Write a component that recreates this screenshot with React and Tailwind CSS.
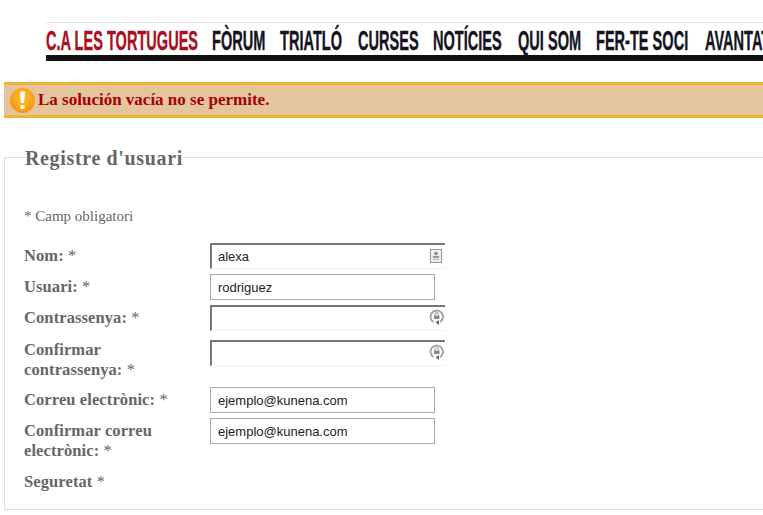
const navItems = [
  { text: 'FÒRUM', width: 'w-[53px]' },
  { text: 'TRIATLÓ', width: 'w-[63px]' },
  { text: 'CURSES', width: 'w-[60px]' },
  { text: 'NOTÍCIES', width: 'w-[70px]' },
  { text: 'QUI SOM', width: 'w-[63px]' },
  { text: 'FER-TE SOCI', width: 'w-[94px]' },
  { text: 'AVANTATGES', width: 'w-[110px]' },
];

function NavLabel({ children }) {
  return <span className="inline-block origin-left scale-x-[0.52] [-webkit-text-stroke:0.4px_currentColor]">{children}</span>;
}

function CardIcon() {
  return (
    <svg width="12" height="14" viewBox="0 0 12 14" className="absolute right-[3px] top-[4px]">
      <rect x="0.5" y="0.5" width="11" height="13" fill="#eee" stroke="#999" />
      <circle cx="6" cy="4.5" r="1.8" fill="#888" />
      <rect x="3" y="7" width="6" height="2" fill="#999" />
      <rect x="3" y="10" width="6" height="1" fill="#bbb" />
    </svg>
  );
}

function LockIcon() {
  return (
    <svg width="15" height="16" viewBox="0 0 15 16" className="absolute right-px top-[2px]">
      <path d="M4.5 13 A6.2 6.2 0 1 1 11 13" fill="none" stroke="#a5a5a5" strokeWidth="2" />
      <path d="M10 11 L6.5 13.5 L10 16 Z" fill="#666" />
      <rect x="5" y="6.5" width="5.5" height="3.5" rx="0.5" fill="#888" />
      <path d="M6 6.5 V5.4 A1.7 1.7 0 0 1 9.5 5.4 V6.5" fill="none" stroke="#888" />
    </svg>
  );
}

function FormRow({ label, value, sunken, icon, inputClass, labelClass, noInput }) {
  return (
    <div className="flex items-start">
      <label className={`w-[186px] shrink-0 pr-8 text-[16.5px] leading-5 font-bold tracking-[0.1px] text-[#666] ${labelClass || 'pt-[3px] pb-2'}`}>
        {label} <span className="font-normal">*</span>
      </label>
      {noInput ? null : sunken ? (
        <div className={`relative h-[26px] w-[235px] border-t-2 border-l-2 border-t-[#777] border-l-[#777] border-b border-b-[#f2f2f2] bg-white pl-[6px] font-['Liberation_Sans',sans-serif] text-[13px] leading-[24px] text-[#222] ${inputClass || ''}`}>
          {value}
          {icon}
        </div>
      ) : (
        <div className="h-[26px] w-[225px] border border-[#aaa] bg-white pl-[7px] font-['Liberation_Sans',sans-serif] text-[13px] leading-[26px] text-[#222]">
          {value}
        </div>
      )}
    </div>
  );
}

export default function App() {
  return (
    <div className="h-[515px] w-[763px] overflow-hidden bg-white font-['Liberation_Serif',serif]">
      <nav className="ml-[46px] mt-[22px] w-[800px] border-t border-t-[#e4e4e4] border-b-[6px] border-b-[#111] pt-[3px]">
        <ul className="flex h-[29px] items-center gap-[15px] whitespace-nowrap font-['Liberation_Sans',sans-serif] text-[28px] font-bold leading-[29px] text-[#14141e]">
          <li className="w-[151px] text-[#a81020]">
            <NavLabel>C.A LES TORTUGUES</NavLabel>
          </li>
          {navItems.map((item) => (
            <li key={item.text} className={item.width}>
              <NavLabel>{item.text}</NavLabel>
            </li>
          ))}
        </ul>
      </nav>

      <div className="ml-1 mt-[21px] flex h-9 w-[800px] items-center border-y-[3px] border-[#eeb533] bg-[#e4c5a0] pl-[6px]">
        <svg width="25" height="25" viewBox="0 0 25 25">
          <defs>
            <radialGradient id="warn" cx="50%" cy="40%" r="60%">
              <stop offset="0%" stopColor="#ffc42e" />
              <stop offset="100%" stopColor="#f7930e" />
            </radialGradient>
          </defs>
          <circle cx="12.5" cy="12.5" r="12.5" fill="url(#warn)" />
          <path d="M10 3.5 H15 L14 15 H11 Z" fill="#fff" />
          <rect x="10.5" y="17" width="4" height="4" fill="#fff" />
        </svg>
        <span className="ml-[3px] text-[17px] font-bold text-[#a80000]">La solución vacía no se permite.</span>
      </div>

      <fieldset className="ml-1 mt-[28px] h-[364px] w-[800px] border border-[#ddd] pl-[19px] pr-0">
        <legend className="ml-px pt-[2px] text-[20px] font-bold leading-5 tracking-[0.65px] text-[#666]">Registre d'usuari</legend>
        <p className="mt-[38px] text-[15px] leading-5 text-[#666]">* Camp obligatori</p>
        <div className="mt-[17px] flex flex-col">
          <FormRow label="Nom:" value="alexa" sunken icon={<CardIcon />} />
          <FormRow label="Usuari:" value="rodriguez" />
          <FormRow label="Contrassenya:" sunken icon={<LockIcon />} />
          <FormRow label="Confirmar contrassenya:" sunken icon={<LockIcon />} inputClass="mt-1" labelClass="pt-[4px] pb-[7px]" />
          <FormRow label="Correu electrònic:" value="ejemplo@kunena.com" />
          <FormRow label="Confirmar correu electrònic:" value="ejemplo@kunena.com" />
          <FormRow label="Seguretat" noInput />
        </div>
      </fieldset>
    </div>
  );
}
